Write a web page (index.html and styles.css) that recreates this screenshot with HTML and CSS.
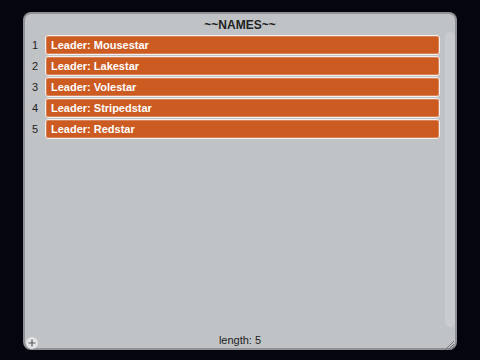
FILE: index.html
```html
<!DOCTYPE html>
<html lang="en">
<head>
    <meta charset="UTF-8">
    <title>~~NAMES~~</title>
    <link rel="stylesheet" href="styles.css">
</head>
<body>

<div class="monitor">
    <div class="monitor-title">~~NAMES~~</div>
    <div class="monitor-body">
        <ol class="items">
            <li class="item"><span class="index">1</span><span class="cell">Leader: Mousestar</span></li>
            <li class="item"><span class="index">2</span><span class="cell">Leader: Lakestar</span></li>
            <li class="item"><span class="index">3</span><span class="cell">Leader: Volestar</span></li>
            <li class="item"><span class="index">4</span><span class="cell">Leader: Stripedstar</span></li>
            <li class="item"><span class="index">5</span><span class="cell">Leader: Redstar</span></li>
        </ol>
        <div class="scrollbar"></div>
    </div>
    <div class="monitor-footer">
        <span class="add-btn">
            <svg width="12" height="12" viewBox="0 0 12 12">
                <circle cx="6" cy="6" r="6" fill="#e3e4e6"/>
                <path d="M6 2.5v7M2.5 6h7" stroke="#5a5c60" stroke-width="1.2"/>
            </svg>
        </span>
        <span class="length">length: 5</span>
        <span class="grip">
            <svg width="11" height="11" viewBox="0 0 11 11">
                <path d="M1 10L10 1M4 10L10 4M7 10L10 7" stroke="#6e7074" stroke-width="1"/>
            </svg>
        </span>
    </div>
</div>

</body>
</html>
```

FILE: styles.css
```css
html, body {
    margin: 0;
    padding: 0;
}
body {
    background-color: #05050f;
    font-family: "Liberation Sans", Arial, sans-serif;
    width: 480px;
    height: 360px;
    overflow: hidden;
}
.monitor {
    margin: 12px 0 0 23px;
    width: 434px;
    height: 338px;
    box-sizing: border-box;
    border: 2px solid #8f9194;
    border-radius: 8px;
    background-color: #c0c3c6;
    display: flex;
    flex-direction: column;
}
.monitor-title {
    height: 14px;
    padding-top: 4px;
    line-height: 14px;
    text-align: center;
    font-size: 12px;
    font-weight: bold;
    color: #222;
}
.monitor-body {
    flex: 1;
    display: flex;
}
.items {
    list-style: none;
    margin: 0;
    padding: 3px 0 0 0;
    flex: 1;
    display: flex;
    flex-direction: column;
    gap: 1px;
}
.item {
    display: flex;
    height: 20px;
}
.index {
    width: 20px;
    text-align: center;
    font-size: 11px;
    line-height: 20px;
    color: #222;
}
.cell {
    flex: 1;
    box-sizing: border-box;
    border: 1px solid #f4f0ec;
    border-radius: 3px;
    background-color: #cc5b22;
    box-shadow: inset 0 0 0 1px #d9825a;
    color: #fff;
    font-size: 11px;
    font-weight: bold;
    line-height: 18px;
    padding-left: 5px;
}
.scrollbar {
    width: 10px;
    margin-left: 5px;
    border-radius: 5px;
    background-color: #c9cccf;
}
.monitor-footer {
    height: 21px;
    position: relative;
    display: flex;
    align-items: flex-end;
    justify-content: center;
}
.length {
    font-size: 11px;
    line-height: 15px;
    color: #222;
}
.add-btn {
    position: absolute;
    left: 1px;
    bottom: 1px;
    height: 12px;
}
.grip {
    position: absolute;
    right: 0;
    bottom: 0;
    height: 11px;
}
```
